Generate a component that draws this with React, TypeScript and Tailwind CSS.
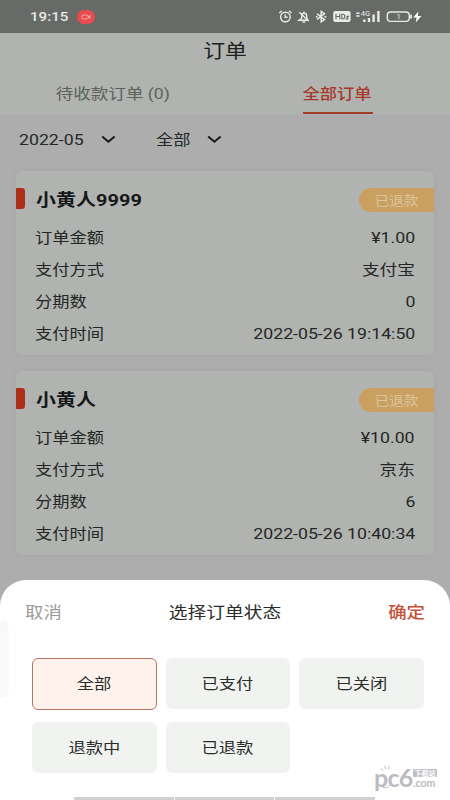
import React from 'react';

interface Order {
  name: string;
  status: string;
  rows: [string, string][];
}

const orders: Order[] = [
  {
    name: '小黄人9999',
    status: '已退款',
    rows: [
      ['订单金额', '¥1.00'],
      ['支付方式', '支付宝'],
      ['分期数', '0'],
      ['支付时间', '2022-05-26 19:14:50'],
    ],
  },
  {
    name: '小黄人',
    status: '已退款',
    rows: [
      ['订单金额', '¥10.00'],
      ['支付方式', '京东'],
      ['分期数', '6'],
      ['支付时间', '2022-05-26 10:40:34'],
    ],
  },
];

const statusOptions = ['全部', '已支付', '已关闭', '退款中', '已退款'];

function StatusIcons() {
  return (
    <svg className="h-[17px] w-[145px]" viewBox="0 0 145 17" fill="none" stroke="#e9ebe8" strokeWidth="1.4">
      {/* Alarm */}
      <circle cx="7.4" cy="9" r="4.8" />
      <path d="M7.2 6.6v2.6h2.4M1.3 5l2.6-2.3M13.5 5l-2.6-2.3" />
      {/* Muted bell */}
      <path d="M21 12.2h9l-1.3-2V8c0-3.6-5-3.6-5 0v2.2zM24.5 14h2.8M21.3 4.3l9.3 8.8M26 3.6v1.6" />
      {/* Bluetooth */}
      <path d="M39 5.9l7.5 5.6-3.3 2.4V3.4l3.3 2.4-7.5 5.6M37.8 8.7h1.8M46.4 8.7h2" strokeWidth="1.5" />
      {/* HD */}
      <rect x="55.2" y="3" width="17.4" height="11" rx="2" fill="#e9ebe8" stroke="none" />
      <path d="M58 5.7v5.6M61.8 5.7v5.6M58 8.5h3.8M63.8 6.2v4.6h1.2c2.4 0 2.4-4.6 0-4.6zM68.3 8.4h2.1l-2 2.6h2.3" stroke="#686a67" strokeWidth="1.1" />
      {/* Signal */}
      <path d="M78.2 5.2h3.4M78.2 8h3.4" strokeWidth="1.5" />
      <text x="82.8" y="8.4" fill="#e9ebe8" stroke="none" className="font-['Roboto'] text-[7.5px]">4G</text>
      <path d="M86.3 14v-2.6M91 14v-4M95.6 14V6.4M100.4 14V3" strokeWidth="2.4" />
      {/* Battery */}
      <rect x="109.3" y="4" width="22" height="9.4" rx="3.4" strokeWidth="1.4" />
      <path d="M133 6.8v3.8" strokeWidth="1.8" />
      <text x="118.4" y="11.4" fill="#e9ebe8" stroke="none" className="font-['Roboto'] text-[7.5px]">1</text>
      <path d="M140.4 3.4l-5.2 6h3.4l-.8 5 5.6-6.4h-3.6z" fill="#fff" stroke="none" />
    </svg>
  );
}

function Chevron() {
  return (
    <svg className="h-[9px] w-[15px]" viewBox="0 0 15 9" fill="none" stroke="#161816" strokeWidth="2">
      <path d="M1.2 1.5l6.2 5.2 6.2-5.2" />
    </svg>
  );
}

function OrderCard({ order }: { order: Order }) {
  return (
    <div className="h-[184px] rounded-md bg-[#b0b3af] pt-[17px] shadow-[0_0_5px_rgba(120,120,128,0.16)]">
      <div className="flex h-[24px] items-center">
        <div className="-mt-[3px] h-[21px] w-[9px] rounded-r-[3px] bg-[#ae2f19]" />
        <span className="ml-[11px] origin-left scale-x-[1.17] text-[17px] leading-[24px] font-bold tracking-[0.1px] text-[#161917]">{order.name}</span>
        <div className="ml-auto flex h-[24px] w-[75px] items-center justify-center rounded-l-full bg-[#c9a060] pt-px">
          <span className="scale-x-[1.12] text-[13px] leading-none text-[#dbc59c]">{order.status}</span>
        </div>
      </div>
      <div className="mt-[10px] pr-[19px] pl-[19px]">
        {order.rows.map(([label, value]) => (
          <div key={label} className="flex h-[32px] items-center justify-between text-[15px] text-[#242725]">
            <span className="origin-left scale-x-[1.15]">{label}</span>
            <span className="origin-right scale-x-[1.18]">{value}</span>
          </div>
        ))}
      </div>
    </div>
  );
}

function Watermark() {
  return (
    <div className="relative flex h-[24px] w-[64px] items-start font-['Lato'] font-bold text-[#bbbcbf]">
      <svg className="absolute top-0 left-[6px] h-[23px] w-[14px]" viewBox="0 0 14 23" fill="none" stroke="#bbbcbf">
        <path d="M4.8 0l.9 3M9.2.5L8 3.4M1 2.6l2.2 2M1 19c2 3.6 7 3.6 9 0" />
      </svg>
      <span className="w-[39px] text-[25px] leading-[23px] tracking-[-0.8px]">pc6</span>
      <div className="flex flex-col pt-[3px]">
        <span className="flex h-[8px] w-[24px] items-center justify-center rounded-[1px] bg-[#c0c1c4] font-['Noto_Sans_CJK_SC'] text-[7px] leading-[8px] text-white">下载站</span>
        <span className="mt-[2px] text-[10.5px] leading-[8px]">.com</span>
      </div>
    </div>
  );
}

function App() {
  return (
    <div className="relative flex h-[800px] w-[450px] flex-col overflow-hidden bg-[#adadad] font-['Roboto','Noto_Sans_CJK_SC',sans-serif]">
      {/* Status bar */}
      <div className="flex h-[33px] shrink-0 items-center bg-[#686a67] pr-[27px] pl-[30px]">
        <span className="w-[38px] origin-left scale-x-[1.12] text-[13.5px] font-medium text-[#e9ebe8]">19:15</span>
        <div className="ml-[9px] flex h-[14px] w-[18px] items-center justify-center rounded-full bg-[#e74b4d]">
          <svg className="h-[6px] w-[10px]" viewBox="0 0 10 6" fill="none" stroke="#f3b0ae">
            <rect x="1" y="1" width="6" height="4" rx="1.5" />
            <path d="M7 3l2-1.5v3z" />
          </svg>
        </div>
        <div className="ml-auto">
          <StatusIcons />
        </div>
      </div>

      {/* Title and tabs */}
      <div className="h-[82px] shrink-0 bg-[#b0b3af]">
        <div className="flex h-[35px] items-center justify-center pt-[4px]">
          <span className="scale-x-[1.15] text-[19px] text-[#1e211f]">订单</span>
        </div>
        <div className="grid h-[46px] grid-cols-2 text-[15px]">
          <div className="flex items-center justify-center pt-[7px]">
            <span className="scale-x-[1.17] text-[#5e615e]">待收款订单 (0)</span>
          </div>
          <div className="flex flex-col items-center pt-[15px]">
            <span className="scale-x-[1.15] font-medium text-[#a63a2b]">全部订单</span>
            <div className="mt-[6px] h-[2px] w-[70px] shrink-0 bg-[#a63a2b]" />
          </div>
        </div>
      </div>

      {/* Filters */}
      <div className="flex h-[56px] shrink-0 items-center pb-[7px] pl-[19px] text-[15px] text-[#252826]">
        <span className="mt-px w-[82px] origin-left scale-x-[1.18]">2022-05</span>
        <Chevron />
        <span className="mt-px ml-[40px] w-[51px] origin-left scale-x-[1.15]">全部</span>
        <Chevron />
      </div>

      <div className="flex flex-col gap-4 px-4">
        {orders.map((order) => (
          <OrderCard key={order.name} order={order} />
        ))}
      </div>

      {/* Bottom sheet */}
      <div className="absolute inset-x-0 bottom-0 h-[220px] rounded-t-[26px] bg-white">
        <div className="flex h-[64px] items-center justify-between px-[25px] pt-px text-[16px]">
          <span className="origin-left scale-x-[1.15] text-[#9a9b9a]">取消</span>
          <span className="scale-x-[1.17] text-[#2b2d2b]">选择订单状态</span>
          <span className="origin-right scale-x-[1.15] font-medium text-[#c4513a]">确定</span>
        </div>
        <div className="mt-[14px] grid grid-cols-3 gap-x-[9px] gap-y-[12px] pr-[26px] pl-[32px]">
          {statusOptions.map((option, index) => (
            <div
              key={option}
              className={
                index === 0
                  ? 'flex h-[52px] items-center justify-center rounded-md border-[1.5px] border-[#b97467] bg-[#fff1eb]'
                  : 'flex h-[51px] items-center justify-center rounded-md bg-[#f1f3f1]'
              }
            >
              <span className="mt-px scale-x-[1.15] text-[15px] text-[#2b2d2b]">{option}</span>
            </div>
          ))}
        </div>
        {/* Side handle */}
        <div className="absolute top-[41px] left-0 h-[76px] w-[8px] rounded-r-md bg-[#f9f9f9] shadow-[0_0_1px_#ddd]" />
        <div className="absolute right-[12px] bottom-0 h-[34px]">
          <Watermark />
        </div>
        {/* Home indicator */}
        <div className="absolute bottom-0 left-[74px] grid h-[3px] w-[301px] grid-cols-3 gap-px">
          <div className="bg-[#d0d0d0]" />
          <div className="bg-[#d0d0d0]" />
          <div className="bg-[#d0d0d0]" />
        </div>
      </div>
    </div>
  );
}

export default App;
